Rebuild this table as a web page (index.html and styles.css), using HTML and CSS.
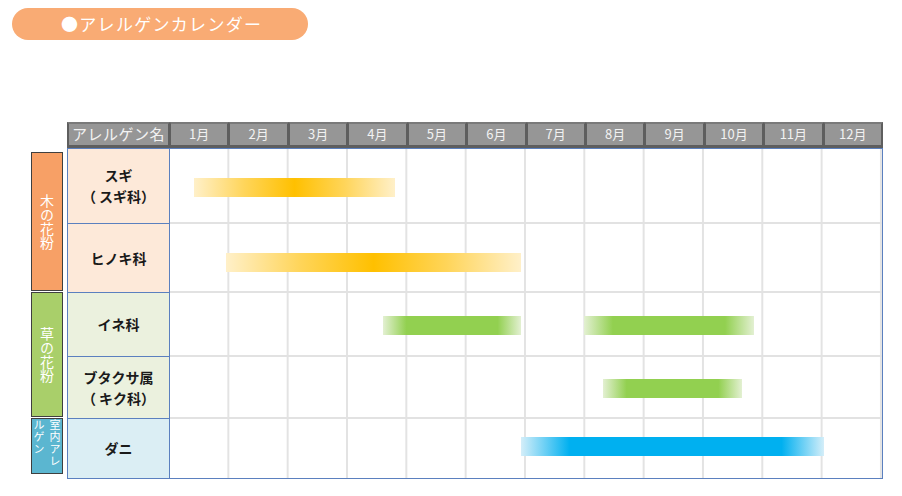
FILE: index.html
```html
<!DOCTYPE html>
<html>
	<head>
		<meta charset="utf-8">
		<title>アレルゲンカレンダー</title>
		<link rel="stylesheet" href="styles.css">
	</head>
	<body>
		<div class="title">●アレルゲンカレンダー</div>
		<div class="calendar">
			<div class="cats">
				<div class="cat tree">木の花粉</div>
				<div class="cat grass">草の花粉</div>
				<div class="cat indoor">室内アレルゲン</div>
			</div>
			<div class="table">
				<div class="head">
					<div class="head-name">アレルゲン名</div>
					<div class="head-month">1月</div>
					<div class="head-month">2月</div>
					<div class="head-month">3月</div>
					<div class="head-month">4月</div>
					<div class="head-month">5月</div>
					<div class="head-month">6月</div>
					<div class="head-month">7月</div>
					<div class="head-month">8月</div>
					<div class="head-month">9月</div>
					<div class="head-month">10月</div>
					<div class="head-month">11月</div>
					<div class="head-month">12月</div>
				</div>
				<div class="body">
					<div class="row tree r1">
						<div class="name">スギ<br>（ スギ科）</div>
						<div class="chart">
							<div class="bar orange" style="left:24px;width:201px;"></div>
						</div>
					</div>
					<div class="row tree r2">
						<div class="name">ヒノキ科</div>
						<div class="chart">
							<div class="bar orange" style="left:56px;width:295px;margin-top:-5px;"></div>
						</div>
					</div>
					<div class="row grass r3">
						<div class="name">イネ科</div>
						<div class="chart">
							<div class="bar green" style="left:213px;width:138px;"></div>
							<div class="bar green" style="left:414px;width:170px;"></div>
						</div>
					</div>
					<div class="row grass r4">
						<div class="name">ブタクサ属<br>（ キク科）</div>
						<div class="chart">
							<div class="bar green" style="left:433px;width:139px;"></div>
						</div>
					</div>
					<div class="row indoor r5">
						<div class="name">ダニ</div>
						<div class="chart last">
							<div class="bar blue" style="left:351px;width:303px;margin-top:-12px;"></div>
						</div>
					</div>
				</div>
			</div>
		</div>
	</body>
</html>
```

FILE: styles.css
```css
*{
	margin: 0;
	padding: 0;
	box-sizing: border-box;
}
body{
	font-family: "Noto Sans CJK JP", "Noto Sans", sans-serif;
	background: #fff;
}
.title{
	width: 296px;
	height: 32px;
	margin: 8px 0 0 12px;
	padding-left: 49px;
	border-radius: 16px;
	background: #f9ab74;
	color: #fff;
	font-size: 17px;
	line-height: 32px;
	letter-spacing: 1.3px;
}
.calendar{
	display: flex;
	gap: 4px;
	margin: 82px 0 0 31px;
}
.cats{
	display: flex;
	flex-direction: column;
	width: 32px;
	margin-top: 30px;
	gap: 1px;
}
.cat{
	display: flex;
	align-items: center;
	justify-content: center;
	border: 1px solid #3f3f3f;
	color: #fff;
	writing-mode: vertical-rl;
	font-size: 14px;
	line-height: 16px;
}
.cat.tree{
	height: 139px;
	background: #f7a066;
}
.cat.grass{
	height: 125px;
	background: #a9cf6a;
}
.cat.indoor{
	height: 56px;
	background: #5bb6d0;
	font-size: 11px;
	line-height: 16px;
	letter-spacing: 1px;
}
.table{
	width: 816px;
}
.head{
	display: grid;
	grid-template-columns: 103px repeat(12, 1fr);
	height: 26px;
}
.head > div{
	background: #969696;
	border: 2px solid #5e5e5e;
	border-left-width: 1px;
	border-top-color: #7a7a7a;
	border-bottom-width: 3px;
	color: #f2f2f2;
	text-align: center;
	font-size: 13px;
	line-height: 20px;
}
.head .head-name{
	font-size: 15px;
	letter-spacing: 0.5px;
	border-left-width: 2px;
}
.body{
	border: 1px solid #5b80bf;
}
.row{
	display: grid;
	grid-template-columns: 102px 1fr;
}
.r1{ height: 75px; }
.r2{ height: 69px; }
.r3{ height: 64px; }
.r4{ height: 62px; }
.r5{ height: 59px; }
.name{
	display: flex;
	align-items: center;
	justify-content: center;
	text-align: center;
	border-right: 1px solid #5b80bf;
	border-bottom: 1px solid #5b80bf;
	font-size: 14px;
	font-weight: bold;
	line-height: 21px;
	color: #1a1a1a;
}
.row.tree .name{
	background: #fde9d9;
}
.row.grass .name{
	background: #ebf1de;
}
.row.indoor .name{
	background: #dbeef4;
	border-bottom: none;
}
.chart{
	position: relative;
	border-bottom: 2px solid #e2e2e2;
	background-image: linear-gradient(to right, transparent calc(100% - 2px), #e3e3e3 calc(100% - 2px));
	background-size: calc(100% / 12) 100%;
}
.chart.last{
	border-bottom: none;
}
.bar{
	position: absolute;
	top: 50%;
	height: 19px;
	margin-top: -8px;
}
.orange{
	background: linear-gradient(to right, #fff0c9 0%, #ffd55a 25%, #ffc000 50%, #ffd55a 75%, #fff0c9 100%);
}
.green{
	background: linear-gradient(to right, #e3f0d2 0%, #92d050 17%, #92d050 83%, #e3f0d2 100%);
}
.blue{
	background: linear-gradient(to right, #d4eef9 0%, #00b0f0 16%, #00b0f0 86%, #d4eef9 100%);
}
```
